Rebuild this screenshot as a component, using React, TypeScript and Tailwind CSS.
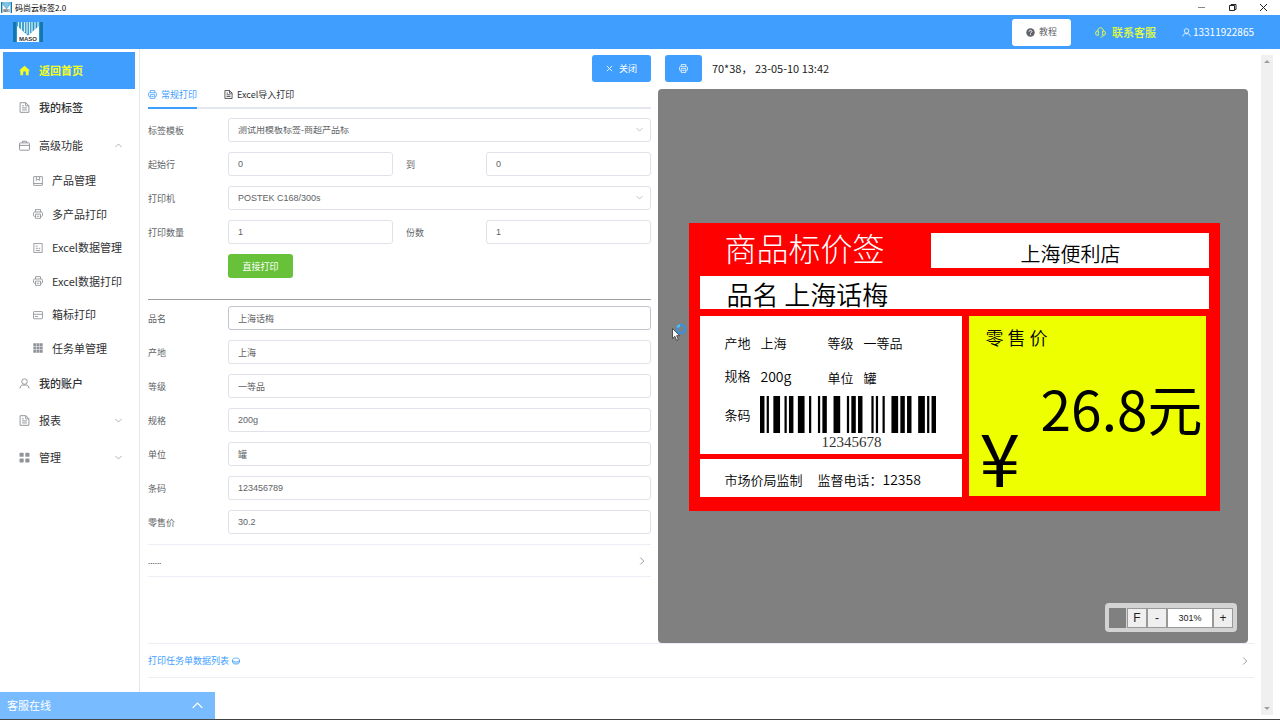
import { useState } from "react";
import type { ReactNode } from "react";

type IconProps = { className?: string };

function Line({ className = "", children }: { className?: string; children: ReactNode }) {
  return (
    <svg
      viewBox="0 0 16 16"
      className={"shrink-0 " + className}
      fill="none"
      stroke="currentColor"
      strokeWidth="1.4"
      aria-hidden="true"
    >
      {children}
    </svg>
  );
}

const HomeIcon = ({ className }: IconProps) => (
  <Line className={className}>
    <path
      fill="currentColor"
      stroke="none"
      d="M8 1 1 7.400c-.5.6-.2 1 .3 1H2V14c0 .6.4 1 1 1h3v-4a2 2 0 0 1 4 0v4h3c.6 0 1-.4 1-1V8.400h.7c.5 0 .8-.4.3-1z"
    />
  </Line>
);

const DocumentIcon = ({ className }: IconProps) => (
  <Line className={className}>
    <path d="M1.600 1h8.400l4.400 4.400V15H1.600z" />
    <path d="M9.800 1v4.600h4.600M4.500 5.500H7M4.500 8.500h7M4.500 11.500h7" />
  </Line>
);

const SuitcaseIcon = ({ className }: IconProps) => (
  <Line className={className}>
    <rect x=".8" y="4.200" width="14.400" height="10.600" rx="1" />
    <path d="M5 4V1.800h6V4M.8 7.800h14.400" />
  </Line>
);

const NotebookIcon = ({ className }: IconProps) => (
  <Line className={className}>
    <rect x="1" y="1" width="14" height="14" rx=".6" />
    <path d="M5.400 1v6L8 5.200 10.600 7V1M1 12h14" />
  </Line>
);

const PrinterIcon = ({ className }: IconProps) => (
  <Line className={className}>
    <path d="M4 11.800H2.400C1.400 11.800.8 11 .8 10V6.600c0-1 .6-1.800 1.600-1.800h11.200c1 0 1.600.8 1.600 1.800V10c0 1-.6 1.800-1.600 1.800H12" />
    <path d="M4 4.800V1h8v3.800M4 8.200h8V15H4zM6 11.600h4" />
  </Line>
);

const TicketIcon = ({ className }: IconProps) => (
  <Line className={className}>
    <rect x="1.400" y="1" width="13.200" height="14" />
    <path d="M4.400 5h3M4.400 8.500h4M4.400 12h7M9.500 8.500h2" />
  </Line>
);

const CardIcon = ({ className }: IconProps) => (
  <Line className={className}>
    <rect x=".8" y="2.500" width="14.400" height="11.500" rx="1" />
    <path d="M1 6.800h14M3 10.500h5" />
  </Line>
);

const GridIcon = ({ className }: IconProps) => (
  <Line className={className}>
    <path
      fill="currentColor"
      stroke="none"
      d="M.5.5h4.500V5H.5zM5.800.5h4.500V5H5.800zM11 .5h4.500V5H11zM.5 5.800H5v4.500H.5zM5.800 5.800h4.500v4.500H5.800zM11 5.800h4.500v4.500H11zM.5 11H5v4.500H.5zM5.800 11h4.500v4.500H5.800zM11 11h4.500v4.500H11z"
    />
  </Line>
);

const MenuIcon = ({ className }: IconProps) => (
  <Line className={className}>
    <g fill="currentColor" stroke="none">
      <rect x=".8" y="1" width="6" height="6" rx="1" />
      <rect x="9.200" y="1" width="6" height="6" rx="1" />
      <rect x=".8" y="9.400" width="6" height="6" rx="1" />
      <rect x="9.200" y="9.400" width="6" height="6" rx="1" />
    </g>
  </Line>
);

const UserIcon = ({ className }: IconProps) => (
  <Line className={className}>
    <circle cx="8" cy="5.200" r="4" />
    <path d="M1.400 15.200c.2-3.200 2-5 4.200-5h4.800c2.200 0 4 1.800 4.200 5" />
  </Line>
);

const HeadsetIcon = ({ className }: IconProps) => (
  <Line className={className}>
    <path d="M4.800 5.800v6.400H4A3.200 3.200 0 0 1 4 5.800zM11.200 5.800v6.400h.8a3.200 3.200 0 0 0 0-6.400zM3.800 5.800C4 3 5.600 1.200 8 1.200S12 3 12.200 5.800M12 12.200c-.4 1.700-1.700 2.600-3.800 2.600" />
  </Line>
);

const QuestionIcon = ({ className }: IconProps) => (
  <Line className={className}>
    <circle cx="8" cy="8" r="7.500" fill="currentColor" stroke="none" />
    <path stroke="#fff" strokeWidth="1.700" d="M5.500 6.500C5.500 5 6.500 4.200 8 4.200s2.500.9 2.500 2.100C10.500 8 8 7.800 8 9.800M8 11v1.600" />
  </Line>
);

const CoinIcon = ({ className }: IconProps) => (
  <Line className={className}>
    <ellipse cx="8" cy="5.800" rx="7" ry="4" />
    <path d="M1 5.800v4.500c0 2.200 3 4 7 4s7-1.800 7-4V5.800M1 8.500c0 2.200 3 3.800 7 3.800s7-1.600 7-3.800" />
  </Line>
);

const CloseIcon = ({ className }: IconProps) => (
  <Line className={className}>
    <path strokeWidth="2" d="m2 2 12 12M14 2 2 14" />
  </Line>
);

const ChevronIcon = ({ className }: IconProps) => (
  <Line className={className}>
    <path strokeWidth="1.900" d="m1 4.500 7 7 7-7" />
  </Line>
);

function Logo({ className = "" }: IconProps) {
  return (
    <svg viewBox="0 0 30 20" className={className} preserveAspectRatio="none" role="img" aria-label="MASO">
      <rect width="30" height="20" fill="#2a93c6" />
      <path fill="#1478b0" d="M0 0h3v20H0zM27 0h3v20h-3z" />
      <path stroke="#d6eef8" strokeWidth="1.300" d="M5.500 0v6M8.500 0v8M11.500 0v10M14 0v12M16.500 0v12M19 0v10M22 0v8M25 0v6" />
      <path fill="#fff" d="m4 4 11 9.500L26 4v16H4z" />
      <text x="15" y="19" textAnchor="middle" fontFamily="Liberation Sans, sans-serif" fontWeight="700" fontSize="6" fill="#333">
        MASO
      </text>
    </svg>
  );
}

const SUB_ITEMS = [
  { label: "产品管理", Icon: NotebookIcon },
  { label: "多产品打印", Icon: PrinterIcon },
  { label: "Excel数据管理", Icon: TicketIcon },
  { label: "Excel数据打印", Icon: PrinterIcon },
  { label: "箱标打印", Icon: CardIcon },
  { label: "任务单管理", Icon: GridIcon },
];

const PRODUCT_FIELDS = [
  { id: "name", label: "品名", value: "上海话梅" },
  { id: "origin", label: "产地", value: "上海" },
  { id: "grade", label: "等级", value: "一等品" },
  { id: "spec", label: "规格", value: "200g" },
  { id: "unit", label: "单位", value: "罐" },
  { id: "barcode", label: "条码", value: "123456789" },
  { id: "price", label: "零售价", value: "30.2" },
];

// Code 128C module widths for 12345678, bar first
const BARCODE = "2112321122321311233311212411121331212331112";

const FIELD =
  "h-6 w-full min-w-0 rounded-[3px] border bg-white px-[9px] font-['Liberation_Sans','Noto_Sans_CJK_SC',sans-serif] text-[9px] text-[#606266] outline-none";

function TitleBar() {
  return (
    <div className="flex h-[15px] shrink-0 items-center bg-white text-black">
      <Logo className="ml-px h-[11px] w-[11px]" />
      <span className="ml-[3px] text-[8px] leading-none">码尚云标签2.0</span>
      <div className="ml-auto flex items-center gap-[22px] pr-[12px]">
        <button type="button" aria-label="最小化">
          <svg viewBox="0 0 9 9" className="size-[9px]" stroke="#888"><path d="M1 4.500h7" /></svg>
        </button>
        <button type="button" aria-label="还原">
          <svg viewBox="0 0 9 9" className="size-[9px]" fill="none" stroke="#222">
            <path d="M1.500 2.500h5v5h-5zM3 2.500v-1h5v5H6.500" />
          </svg>
        </button>
        <button type="button" aria-label="关闭窗口">
          <svg viewBox="0 0 9 9" className="size-[9px]" stroke="#222"><path d="m1 1 7 7M8 1 1 8" /></svg>
        </button>
      </div>
    </div>
  );
}

function Header() {
  return (
    <header className="flex h-[34px] shrink-0 items-center bg-[#409eff] text-white">
      <Logo className="ml-[13px] h-5 w-[30px]" />
      <button
        type="button"
        className="ml-auto flex h-[27px] w-[59px] items-center justify-center gap-1 rounded-[3px] bg-white text-[9px] text-[#606266]"
      >
        <QuestionIcon className="size-[9px]" />
        教程
      </button>
      <a href="#service" className="ml-6 flex items-center gap-1.5 text-[11px] leading-none font-medium text-[#e4ff3a]">
        <HeadsetIcon className="size-[11px]" />
        联系客服
      </a>
      <a href="#account" className="mr-[26px] ml-[26px] flex items-center gap-[2px] text-[10px] leading-none">
        <UserIcon className="size-[9px]" />
        13311922865
      </a>
    </header>
  );
}

function Sidebar() {
  const [open, setOpen] = useState(true);
  const row = "flex h-[37px] w-full items-center pl-4 pr-[13px] text-[11px] leading-none";

  return (
    <nav className="w-[140px] shrink-0 border-r border-[#e4e7ed] pt-[3px] pr-1 pl-[3px] text-[#303133]">
      <a href="#home" className={row + " bg-[#409eff] font-bold text-[#f4ff1f]"}>
        <HomeIcon className="mr-[9px] size-[11px]" />
        返回首页
      </a>
      <a href="#labels" className={row + " mb-px font-medium"}>
        <DocumentIcon className="mr-[9px] size-[11px] text-[#909399]" />
        我的标签
      </a>
      <button type="button" className={row} aria-expanded={open} onClick={() => setOpen(!open)}>
        <SuitcaseIcon className="mr-[9px] size-[11px] text-[#909399]" />
        高级功能
        <ChevronIcon className={"ml-auto size-[7px] text-[#a0a4aa] " + (open ? "rotate-180" : "")} />
      </button>
      {open && (
        <ul className="grid h-[201px] auto-rows-fr">
          {SUB_ITEMS.map(({ label, Icon }) => (
            <li key={label}>
              <a href="#sub" className="flex h-full items-center pl-[30px] text-[11px] leading-none">
                <Icon className="mr-[9px] size-[10px] text-[#909399]" />
                {label}
              </a>
            </li>
          ))}
        </ul>
      )}
      <a href="#me" className={row + " font-medium"}>
        <UserIcon className="mr-[9px] size-[11px] text-[#909399]" />
        我的账户
      </a>
      <button type="button" className={row}>
        <DocumentIcon className="mr-[9px] size-[11px] text-[#909399]" />
        报表
        <ChevronIcon className="ml-auto size-[7px] text-[#a0a4aa]" />
      </button>
      <button type="button" className={row}>
        <MenuIcon className="mr-[9px] size-[11px] text-[#909399]" />
        管理
        <ChevronIcon className="ml-auto size-[7px] text-[#a0a4aa]" />
      </button>
    </nav>
  );
}

function TextField({ id, label, value }: { id: string; label: string; value: string }) {
  return (
    <div className="flex items-center">
      <label htmlFor={id} className="w-20 shrink-0">{label}</label>
      <input
        id={id}
        defaultValue={value}
        className={FIELD + (id === "name" ? " border-[#c0c4cc]" : " border-[#dfe2e8]")}
      />
    </div>
  );
}

function SelectField({ id, label, value }: { id: string; label: string; value: string }) {
  return (
    <div className="flex items-center">
      <label htmlFor={id} className="w-20 shrink-0">{label}</label>
      <div className="relative min-w-0 flex-1">
        <select id={id} className={FIELD + " appearance-none border-[#dfe2e8]"}>
          <option>{value}</option>
        </select>
        <ChevronIcon className="pointer-events-none absolute top-2 right-2 size-[7px] text-[#b4b8c0]" />
      </div>
    </div>
  );
}

function PrintForm() {
  return (
    <section className="min-w-0 pr-1 text-[9px] leading-none text-[#606266]">
      <div className="flex justify-end">
        <button
          type="button"
          className="flex h-[27px] w-[59px] items-center justify-center gap-1.5 rounded-[3px] bg-[#409eff] text-white"
        >
          <CloseIcon className="size-[7px]" />
          关闭
        </button>
      </div>
      <div role="tablist" className="flex h-[27px] gap-[27px] border-b-2 border-[#e4e7ed]">
        <button
          type="button"
          role="tab"
          aria-selected="true"
          className="-mb-0.5 flex items-center gap-1 border-b-2 border-[#409eff] text-[#409eff]"
        >
          <PrinterIcon className="size-[9px]" />
          常规打印
        </button>
        <button type="button" role="tab" aria-selected="false" className="flex items-center gap-1 text-[#303133]">
          <DocumentIcon className="size-[9px]" />
          Excel导入打印
        </button>
      </div>

      <form className="mt-[9px] flex flex-col gap-2.5" onSubmit={(e) => e.preventDefault()}>
        <SelectField id="template" label="标签模板" value="测试用模板标签-商超产品标" />
        <div className="grid grid-cols-2 gap-[13px]">
          <TextField id="from" label="起始行" value="0" />
          <TextField id="to" label="到" value="0" />
        </div>
        <SelectField id="printer" label="打印机" value="POSTEK C168/300s" />
        <div className="grid grid-cols-2 gap-[13px]">
          <TextField id="count" label="打印数量" value="1" />
          <TextField id="copies" label="份数" value="1" />
        </div>
        <button type="submit" className="ml-20 h-6 w-[65px] rounded-[3px] bg-[#67c23a] text-white">
          直接打印
        </button>
      </form>

      <div className="mt-[21px] flex flex-col gap-2.5 border-t border-[#a0a0a0] pt-1.5">
        {PRODUCT_FIELDS.map((f) => (
          <TextField key={f.id} {...f} />
        ))}
      </div>
      <button
        type="button"
        className="mt-2.5 flex h-[33px] w-full items-center justify-between border-y border-[#ebeef5] pr-[5px] text-[8px] text-[#303133]"
      >
        ......
        <ChevronIcon className="size-2 -rotate-90 text-[#909399]" />
      </button>
    </section>
  );
}

function Barcode() {
  const bars: { x: number; w: number }[] = [];
  let x = 0;
  [...BARCODE].forEach((c, i) => {
    if (i % 2 === 0) bars.push({ x, w: Number(c) });
    x += Number(c);
  });
  return (
    <svg viewBox={`0 0 ${x} 10`} preserveAspectRatio="none" className="h-[37px] w-[176px]" aria-hidden="true">
      {bars.map((b) => (
        <rect key={b.x} x={b.x} width={b.w} height="10" />
      ))}
    </svg>
  );
}

function PriceLabel() {
  return (
    <div className="h-[288px] w-[531px] shrink-0 bg-[#ff0000] px-[11px] pt-2.5 font-[350] text-black">
      <div className="flex h-[35px] items-start justify-between">
        <h2 className="pl-6 text-[32px] leading-7 font-light text-white">商品标价签</h2>
        <div className="flex h-full w-[278px] items-center justify-center bg-white pt-1.5 text-[20px] leading-none">
          上海便利店
        </div>
      </div>
      <div className="mt-2 flex h-[33px] items-center bg-white pt-0.5 pl-[26px] text-[26px] leading-none">
        品名 上海话梅
      </div>
      <div className="mt-[7px] flex gap-[7px]">
        <div className="flex w-[262px] flex-col gap-[5px] text-[13px] leading-none">
          <div className="h-[138px] bg-white pt-5 pl-6">
            <dl className="grid grid-cols-[36px_67px_36px_1fr] gap-y-5">
              <dt>产地</dt>
              <dd>上海</dd>
              <dt>等级</dt>
              <dd>一等品</dd>
              <dt>规格</dt>
              <dd className="text-[14px] leading-none">200g</dd>
              <dt className="pt-0.5">单位</dt>
              <dd className="pt-0.5">罐</dd>
            </dl>
            <div className="mt-3 flex">
              <span className="w-9 pt-3">条码</span>
              <div className="flex flex-col items-center">
                <Barcode />
                <span className="pt-0.5 pl-1.5 font-['Liberation_Serif',serif] text-[15px] leading-none text-[#333]">
                  12345678
                </span>
              </div>
            </div>
          </div>
          <div className="flex h-[38px] items-center bg-white pt-0.5 pl-6">
            <span>市场价局监制</span>
            <span className="ml-[15px]">监督电话：</span>
            <span className="text-[14px]">12358</span>
          </div>
        </div>
        <div className="flex h-[180px] w-[237px] flex-col bg-[#eeff00] pt-3 pl-4 leading-none">
          <span className="text-[18px] leading-none">零 售 价</span>
          <span className="mt-[34px] mr-1 self-end text-[55px] leading-none font-normal">26.8元</span>
          <span className="-mt-4 -ml-1.5 text-[73px] leading-none font-normal">¥</span>
        </div>
      </div>
    </div>
  );
}

function ZoomBar() {
  const btn = "h-5 w-5 border border-[#999] bg-[#efefef] text-[12px] leading-none text-[#222]";
  return (
    <div className="absolute right-[11px] bottom-[11px] flex rounded-[4px] bg-[#d3d3d3] p-[4px] pt-[5px] font-['Liberation_Sans',sans-serif]">
      <button type="button" aria-label="背景" className="mr-px h-5 w-[17px] bg-[#808080]" />
      <button type="button" className={btn}>F</button>
      <button type="button" className={btn}>-</button>
      <input
        aria-label="缩放"
        defaultValue="301%"
        className="h-5 w-[46px] border border-[#999] bg-white text-center text-[9px] text-[#222] outline-none"
      />
      <button type="button" className={btn}>+</button>
    </div>
  );
}

function Pointer() {
  return (
    <svg viewBox="0 0 16 20" className="pointer-events-none absolute top-[233px] left-[13px] h-5 w-4" aria-hidden="true">
      <circle cx="10" cy="7" r="4" fill="none" stroke="#3f8fd6" strokeWidth="2.500" />
      <path d="M6.500 5.500A4 4 0 0 1 9 3.100" fill="none" stroke="#4fc3f0" strokeWidth="2.500" />
      <path d="M1.500 6.500v10l2.400-2.200 1.700 4 1.700-.8-1.700-3.800h3z" fill="#fff" stroke="#333" strokeWidth=".8" />
    </svg>
  );
}

function Preview() {
  return (
    <section className="flex min-w-0 flex-col pr-1.5 pl-[3px]">
      <div className="flex items-center pl-[7px]">
        <button
          type="button"
          aria-label="打印"
          className="flex h-[27px] w-[37px] items-center justify-center rounded-[3px] bg-[#409eff] text-white"
        >
          <PrinterIcon className="size-[9px]" />
        </button>
        <span className="ml-2.5 text-[11px] leading-none whitespace-pre text-[#222]">70*38， 23-05-10 13:42</span>
      </div>
      <div className="relative mt-[7px] flex min-h-[554px] flex-1 items-center justify-center rounded-[4px] bg-[#808080] pt-0.5 pl-1">
        <PriceLabel />
        <Pointer />
        <ZoomBar />
      </div>
    </section>
  );
}

export default function App() {
  return (
    <div className="relative flex h-screen flex-col overflow-hidden border-b border-[#444] bg-white font-['Noto_Sans_CJK_SC',sans-serif]">
      <TitleBar />
      <Header />
      <div className="flex min-h-0 flex-1">
        <Sidebar />
        <main className="min-w-0 flex-1 overflow-hidden pt-1.5 pr-[7px] pl-2">
          <div className="grid grid-cols-[11fr_13fr]">
            <PrintForm />
            <Preview />
          </div>
          <button
            type="button"
            className="flex h-[35px] w-full items-center border-y border-[#ebeef5] pr-[5px] text-[9px] leading-none text-[#409eff]"
          >
            打印任务单数据列表
            <CoinIcon className="ml-[3px] size-2" />
            <ChevronIcon className="ml-auto size-2 -rotate-90 text-[#909399]" />
          </button>
        </main>
        <div className="mt-1.5 mr-[7px] mb-1 flex w-3 flex-col items-center justify-between bg-[#f0f0f0] py-[5px]">
          <svg viewBox="0 0 6 3" className="h-[3px] w-1.5" fill="#a0a0a0"><path d="M3 0 6 3H0z" /></svg>
          <svg viewBox="0 0 6 3" className="h-[3px] w-1.5" fill="#a0a0a0"><path d="M0 0h6L3 3z" /></svg>
        </div>
      </div>
      <button
        type="button"
        className="absolute bottom-0 left-0 flex h-[27px] w-[215px] items-center justify-between bg-[#79bbff] pr-3 pl-[7px] text-[11px] leading-none text-white"
      >
        客服在线
        <ChevronIcon className="size-[11px] rotate-180" />
      </button>
    </div>
  );
}
